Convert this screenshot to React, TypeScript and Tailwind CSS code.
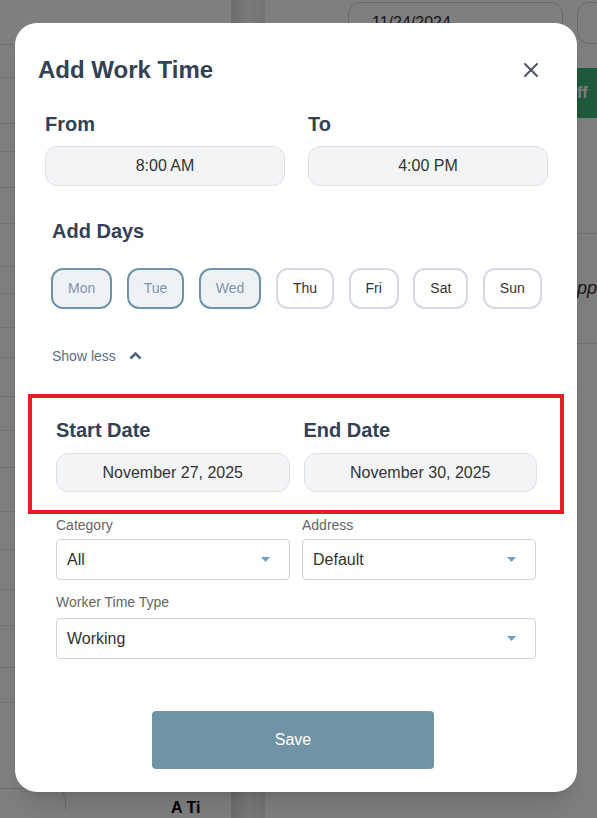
import { X } from "lucide-react";

const days = [
  { label: "Mon", on: true },
  { label: "Tue", on: true },
  { label: "Wed", on: true },
  { label: "Thu", on: false },
  { label: "Fri", on: false },
  { label: "Sat", on: false },
  { label: "Sun", on: false },
];

const leftRows = [45, 33, 46, 28, 36, 36, 43, 27, 34, 30, 39, 34, 37, 44, 38, 40, 36, 42, 35];

function Caret() {
  return (
    <svg width="9" height="5" viewBox="0 0 9 5" className="shrink-0">
      <path d="M0 0 L9 0 L4.5 5 Z" fill="#6f9ec6" />
    </svg>
  );
}

function SelectBox({ value }: { value: string }) {
  return (
    <div className="flex h-[41px] items-center justify-between rounded border border-[#cfd3d9] bg-white pl-[10px] pr-[19px] text-[16px] text-[#333]">
      <span>{value}</span>
      <Caret />
    </div>
  );
}

function Background() {
  return (
    <div className="flex h-full">
      <div className="flex w-[232px] shrink-0 flex-col border-r border-[#e2e2e2]">
        {leftRows.map((h, i) => (
          <div key={i} className="border-b border-[#e6e6e6]" style={{ height: h }} />
        ))}
        <div className="mt-auto flex items-start gap-[105px]">
          <div className="h-[22px] w-[66px] rounded-tr-xl border-t border-r border-[#d8d8d8]" />
          <span className="mt-[10px] text-[16px] leading-[20px] font-bold text-black">A Ti</span>
        </div>
      </div>
      <div className="w-[33px] shrink-0 bg-gradient-to-r from-[#dcdcdc] via-[#f4f4f4] to-[#e8e8e8]" />
      <div className="flex min-w-0 flex-1 flex-col overflow-hidden">
        <div className="flex gap-[14px] pt-[2px] pl-[83px]">
          <div className="flex h-[42px] w-[215px] shrink-0 items-center rounded-xl border border-[#d4d4d4] pl-[23px] text-[16px] text-[#333]">
            11/24/2024
          </div>
          <div className="h-[42px] w-[40px] shrink-0 rounded-xl border border-[#d4d4d4]" />
        </div>
        <div className="mt-[24px] flex justify-end">
          <div className="flex h-[50px] w-[20px] items-center bg-[#3cb478] text-[16px] font-bold text-white">
            ff
          </div>
        </div>
        <div className="mt-[115px] border-b border-[#e0e0e0]" />
        <div className="flex h-[110px] items-center justify-end border-b border-[#e0e0e0] text-[18px] italic text-[#333]">
          <span className="w-[20px] overflow-hidden">ppr</span>
        </div>
      </div>
    </div>
  );
}

export default function App() {
  return (
    <div className="relative h-[818px] w-full overflow-hidden bg-white font-['Liberation_Sans',Arial,sans-serif]">
      <Background />
      <div className="absolute inset-0 bg-black/50 pt-[23px] pl-[15px]">
        <div className="w-[562px] rounded-[22px] bg-white pt-[31px] pb-[23px] shadow-xl">
          <div className="flex items-center justify-between pl-[23px] pr-[34px]">
            <h2 className="text-[24px] leading-[32px] font-bold text-[#334155]">Add Work Time</h2>
            <X size={24} strokeWidth={2} className="text-[#4b5563]" />
          </div>

          <div className="mt-[24px] grid grid-cols-2 gap-[23px] pl-[30px] pr-[29px]">
            <div>
              <div className="mb-[8px] text-[20px] leading-[28px] font-bold text-[#334155]">From</div>
              <div className="flex h-[40px] items-center justify-center rounded-xl border border-[#dde1e7] bg-[#f3f4f6] text-[16px] text-[#333]">
                8:00 AM
              </div>
            </div>
            <div>
              <div className="mb-[8px] text-[20px] leading-[28px] font-bold text-[#334155]">To</div>
              <div className="flex h-[40px] items-center justify-center rounded-xl border border-[#dde1e7] bg-[#f3f4f6] text-[16px] text-[#333]">
                4:00 PM
              </div>
            </div>
          </div>

          <div className="mt-[31px] pl-[37px] text-[20px] leading-[28px] font-bold text-[#334155]">Add Days</div>

          <div className="mt-[23px] flex gap-[14.5px] pl-[36px]">
            {days.map((d) => (
              <button
                key={d.label}
                className={`flex h-[41px] items-center rounded-xl border-2 px-[15px] text-[14px] ${
                  d.on
                    ? "border-[#7193a8] bg-[#eef2f6] text-[#7d95aa]"
                    : "border-[#d5dae3] bg-white text-[#333]"
                }`}
              >
                {d.label}
              </button>
            ))}
          </div>

          <div className="mt-[37px] flex items-center gap-[13px] pl-[37px] text-[14px] leading-[20px] text-[#5a6e85]">
            <span>Show less</span>
            <svg width="13" height="8" viewBox="0 0 13 8">
              <path d="M1.5 6.5 L6.5 1.5 L11.5 6.5" fill="none" stroke="#52667a" strokeWidth="2.6" />
            </svg>
          </div>

          <div className="mx-[13px] mt-[28px] border-4 border-[#e31e24] pt-[18px] pr-[23px] pb-[18px] pl-[24px]">
            <div className="grid grid-cols-2 gap-[14px]">
              <div>
                <div className="mb-[9px] text-[20px] leading-[28px] font-bold text-[#334155]">Start Date</div>
                <div className="flex h-[39px] items-center justify-center rounded-xl border border-[#dde1e7] bg-[#f3f4f6] text-[16px] text-[#333]">
                  November 27, 2025
                </div>
              </div>
              <div>
                <div className="mb-[9px] text-[20px] leading-[28px] font-bold text-[#334155]">End Date</div>
                <div className="flex h-[39px] items-center justify-center rounded-xl border border-[#dde1e7] bg-[#f3f4f6] text-[16px] text-[#333]">
                  November 30, 2025
                </div>
              </div>
            </div>
          </div>

          <div className="mt-[1px] px-[41px]">
            <div className="grid grid-cols-2 gap-[12px]">
              <div>
                <div className="mb-[4px] text-[14px] leading-[20px] text-[#666]">Category</div>
                <SelectBox value="All" />
              </div>
              <div>
                <div className="mb-[4px] text-[14px] leading-[20px] text-[#666]">Address</div>
                <SelectBox value="Default" />
              </div>
            </div>
            <div className="mt-[12px] mb-[6px] text-[14px] leading-[20px] text-[#666]">Worker Time Type</div>
            <SelectBox value="Working" />
          </div>

          <div className="mt-[52px] flex justify-center pr-[6px]">
            <button className="h-[58px] w-[282px] rounded bg-[#7193a6] text-[16px] font-medium text-white">
              Save
            </button>
          </div>
        </div>
      </div>
    </div>
  );
}
